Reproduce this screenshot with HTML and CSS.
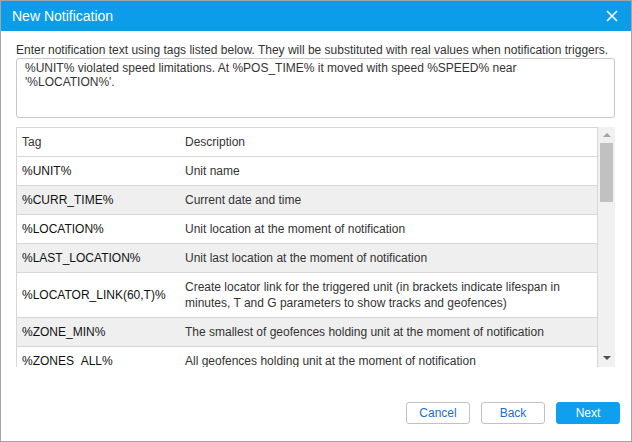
FILE: index.html
```html
<!DOCTYPE html>
<html lang="en">
<head>
  <meta charset="UTF-8" />
  <meta name="viewport" content="width=device-width, initial-scale=1.0" />
  <title>New Notification</title>
  <link rel="stylesheet" href="styles.css">
</head>
<body>
  <div class="dialog">
    <!-- Header -->
    <div class="dialog-header">
      <span class="dialog-title">New Notification</span>
      <svg class="close-icon" width="12" height="12" viewBox="0 0 12 12">
        <path d="M1 1 L11 11 M11 1 L1 11" stroke="#fff" stroke-width="1.6" fill="none" />
      </svg>
    </div>

    <!-- Body -->
    <div class="dialog-body">
      <div class="hint">Enter notification text using tags listed below. They will be substituted with real values when notification triggers.</div>
      <textarea class="message" spellcheck="false">%UNIT% violated speed limitations. At %POS_TIME% it moved with speed %SPEED% near '%LOCATION%'.</textarea>

      <div class="tags-box">
        <div class="tags-scroll">
          <table class="tags-table">
            <thead>
              <tr><th class="col-tag">Tag</th><th>Description</th></tr>
            </thead>
            <tbody>
              <tr><td class="tag">%UNIT%</td><td>Unit name</td></tr>
              <tr><td class="tag">%CURR_TIME%</td><td>Current date and time</td></tr>
              <tr><td class="tag">%LOCATION%</td><td>Unit location at the moment of notification</td></tr>
              <tr><td class="tag">%LAST_LOCATION%</td><td>Unit last location at the moment of notification</td></tr>
              <tr><td class="tag">%LOCATOR_LINK(60,T)%</td><td>Create locator link for the triggered unit (in brackets indicate lifespan in minutes, T and G parameters to show tracks and geofences)</td></tr>
              <tr><td class="tag">%ZONE_MIN%</td><td>The smallest of geofences holding unit at the moment of notification</td></tr>
              <tr><td class="tag">%ZONES_ALL%</td><td>All geofences holding unit at the moment of notification</td></tr>
            </tbody>
          </table>
        </div>
        <!-- Scrollbar -->
        <div class="scrollbar">
          <div class="arrow arrow-up"></div>
          <div class="thumb"></div>
          <div class="track"></div>
          <div class="arrow arrow-down"></div>
        </div>
      </div>
    </div>

    <!-- Buttons -->
    <div class="dialog-footer">
      <button class="btn">Cancel</button>
      <button class="btn">Back</button>
      <button class="btn btn-primary">Next</button>
    </div>
  </div>
</body>
</html>
```

FILE: styles.css
```css
body {
  font-family: "Liberation Sans", Arial, sans-serif;
  margin: 0;
  background-color: #fff;
  color: #333;
}

/* Вікно */
.dialog {
  width: 632px;
  height: 442px;
  box-sizing: border-box;
  border: 1px solid #a5a5a5;
  display: flex;
  flex-direction: column;
  background-color: #fff;
}

.dialog-header {
  height: 30px;
  background-color: #0c9ce9;
  color: #fff;
  display: flex;
  align-items: center;
  justify-content: space-between;
  padding: 0 13px 0 11px;
  flex-shrink: 0;
}

.dialog-title {
  font-size: 14px;
}

.close-icon {
  display: block;
}

.dialog-body {
  padding: 12px 16px 0 15px;
}

.hint {
  font-size: 12px;
  line-height: 14px;
  white-space: nowrap;
}

.message {
  display: block;
  width: 100%;
  height: 60px;
  margin: 1px 0 0;
  box-sizing: border-box;
  padding: 2px 8px;
  border: 1px solid #c8c8c8;
  border-radius: 3px;
  font-family: "Liberation Sans", Arial, sans-serif;
  font-size: 12px;
  line-height: 14px;
  color: #333;
  resize: none;
  overflow: hidden;
  outline: none;
}

/* Таблиця тегів */
.tags-box {
  display: flex;
  height: 240px;
  margin-top: 9px;
}

.tags-scroll {
  flex: 1;
  overflow: hidden;
}

.tags-table {
  width: 100%;
  border-collapse: collapse;
  font-size: 12px;
  line-height: 16px;
}

.tags-table th,
.tags-table td {
  border: 1px solid #d6d6d6;
  border-left: none;
  border-right: none;
  padding: 6px 6px 6px 5px;
  text-align: left;
  vertical-align: middle;
  font-weight: normal;
}

.tags-table tr th:first-child,
.tags-table tr td:first-child {
  border-left: 1px solid #d6d6d6;
}

.tags-table tr th:last-child,
.tags-table tr td:last-child {
  border-right: 1px solid #d6d6d6;
}

.tags-table .col-tag {
  width: 152px;
}

.tags-table tbody tr:nth-child(even) {
  background-color: #efefef;
}

.tags-table .tag {
  color: #111;
}

/* Смуга прокрутки */
.scrollbar {
  width: 17px;
  background-color: #f1f1f1;
  display: flex;
  flex-direction: column;
  align-items: center;
}

.arrow {
  width: 0;
  height: 0;
  border-left: 4px solid transparent;
  border-right: 4px solid transparent;
}

.arrow-up {
  margin: 6px 0 6px;
  border-bottom: 4px solid #a3a3a3;
}

.arrow-down {
  margin: 6px 0 7px;
  border-top: 4px solid #505050;
}

.thumb {
  width: 13px;
  height: 59px;
  background-color: #c1c1c1;
}

.track {
  flex: 1;
}

/* Кнопки */
.dialog-footer {
  display: flex;
  justify-content: flex-end;
  gap: 11px;
  margin-top: 35px;
  padding-right: 11px;
}

.btn {
  width: 64px;
  height: 22px;
  font-family: "Liberation Sans", Arial, sans-serif;
  font-size: 12px;
  color: #1b6fc4;
  background-color: #fff;
  border: 1px solid #c2c2c2;
  border-radius: 3px;
  padding: 0;
  cursor: pointer;
}

.btn-primary {
  background-color: #0ea0ef;
  border-color: #0ea0ef;
  color: #fff;
}
```
